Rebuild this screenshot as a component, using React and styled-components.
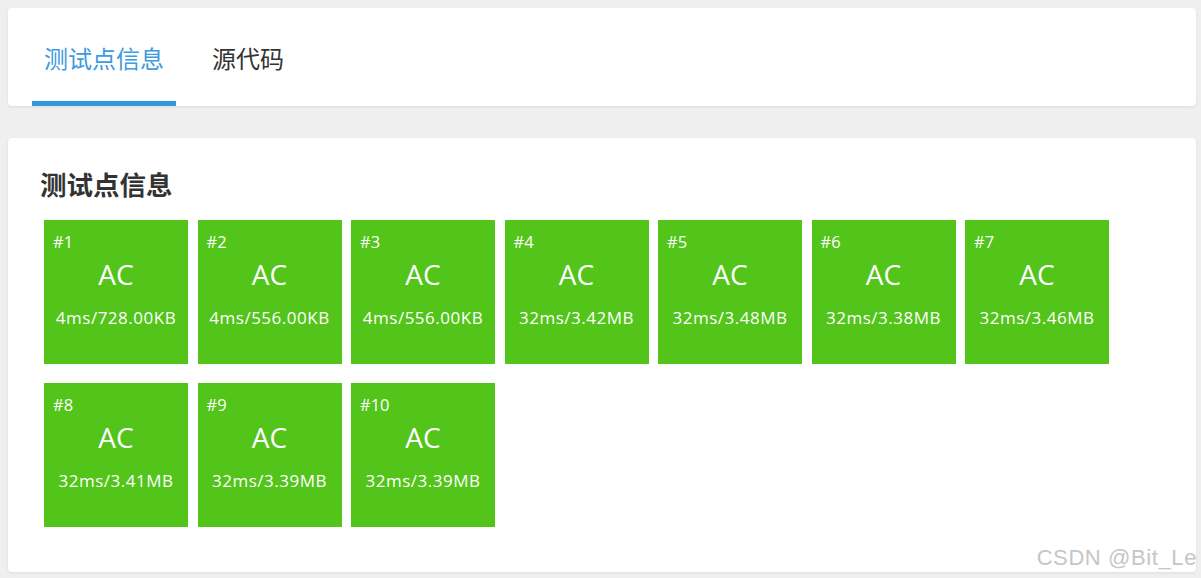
import React from "react";
import styled, { createGlobalStyle } from "styled-components";

const Global = createGlobalStyle`
  html, body { margin: 0; padding: 0; }
  body {
    background: #efefef;
    font-family: "Open Sans", "Noto Sans CJK SC", sans-serif;
    width: 1201px;
    height: 578px;
    overflow: hidden;
  }
`;

const Page = styled.div`
  position: relative;
  padding: 8px 5px 0 8px;
  display: flex;
  flex-direction: column;
  gap: 32px;
  height: 578px;
  box-sizing: border-box;
`;

const Card = styled.div`
  background: #fff;
  border-radius: 4px;
  box-shadow: 0 1px 3px rgba(0, 0, 0, 0.08);
`;

const TabBar = styled(Card)`
  height: 98px;
  display: flex;
  padding-left: 24px;
  gap: 24px;
  box-sizing: border-box;
`;

const Tab = styled.div`
  height: 98px;
  box-sizing: border-box;
  padding: 5px 12px 0;
  display: flex;
  align-items: center;
  font-size: 24px;
  color: ${(p) => (p.$active ? "#3d9be0" : "#333")};
  border-bottom: 5px solid ${(p) => (p.$active ? "#3498db" : "transparent")};
`;

const Panel = styled(Card)`
  height: 434px;
  box-sizing: border-box;
  padding: 32px 32px;
`;

const Title = styled.h2`
  margin: 0;
  font-size: 26.5px;
  line-height: 31px;
  font-weight: 700;
  color: #333;
`;

const Grid = styled.div`
  margin-top: 19px;
  padding-left: 4px;
  display: grid;
  grid-template-columns: repeat(7, 144px);
  column-gap: 9.5px;
  row-gap: 19px;
`;

const CaseBox = styled.div`
  width: 144px;
  height: 144px;
  box-sizing: border-box;
  background: #52c41a;
  color: #fff;
  padding: 11px 9px;
  display: flex;
  flex-direction: column;
`;

const Index = styled.div`
  font-size: 16.5px;
  line-height: 22px;
`;

const Verdict = styled.div`
  margin-top: 3px;
  font-size: 28px;
  line-height: 36px;
  text-align: center;
`;

const Stats = styled.div`
  margin-top: 14px;
  font-size: 17px;
  line-height: 24px;
  letter-spacing: 0.5px;
  text-align: center;
  white-space: nowrap;
  margin-left: -8px;
  margin-right: -8px;
`;

const Watermark = styled.div`
  position: absolute;
  right: 4px;
  bottom: 7px;
  font-family: "Liberation Sans", Arial, sans-serif;
  font-size: 22px;
  color: #c6c6c6;
  text-shadow: 0 1px 1px rgba(255, 255, 255, 0.8);
  letter-spacing: 0.6px;
`;

const cases = [
  "4ms/728.00KB",
  "4ms/556.00KB",
  "4ms/556.00KB",
  "32ms/3.42MB",
  "32ms/3.48MB",
  "32ms/3.38MB",
  "32ms/3.46MB",
  "32ms/3.41MB",
  "32ms/3.39MB",
  "32ms/3.39MB",
];

export default function App() {
  return (
    <>
      <Global />
      <Page>
        <TabBar>
          <Tab $active>测试点信息</Tab>
          <Tab>源代码</Tab>
        </TabBar>
        <Panel>
          <Title>测试点信息</Title>
          <Grid>
            {cases.map((s, i) => (
              <CaseBox key={i}>
                <Index>#{i + 1}</Index>
                <Verdict>AC</Verdict>
                <Stats>{s}</Stats>
              </CaseBox>
            ))}
          </Grid>
        </Panel>
        <Watermark>CSDN @Bit_Le</Watermark>
      </Page>
    </>
  );
}
